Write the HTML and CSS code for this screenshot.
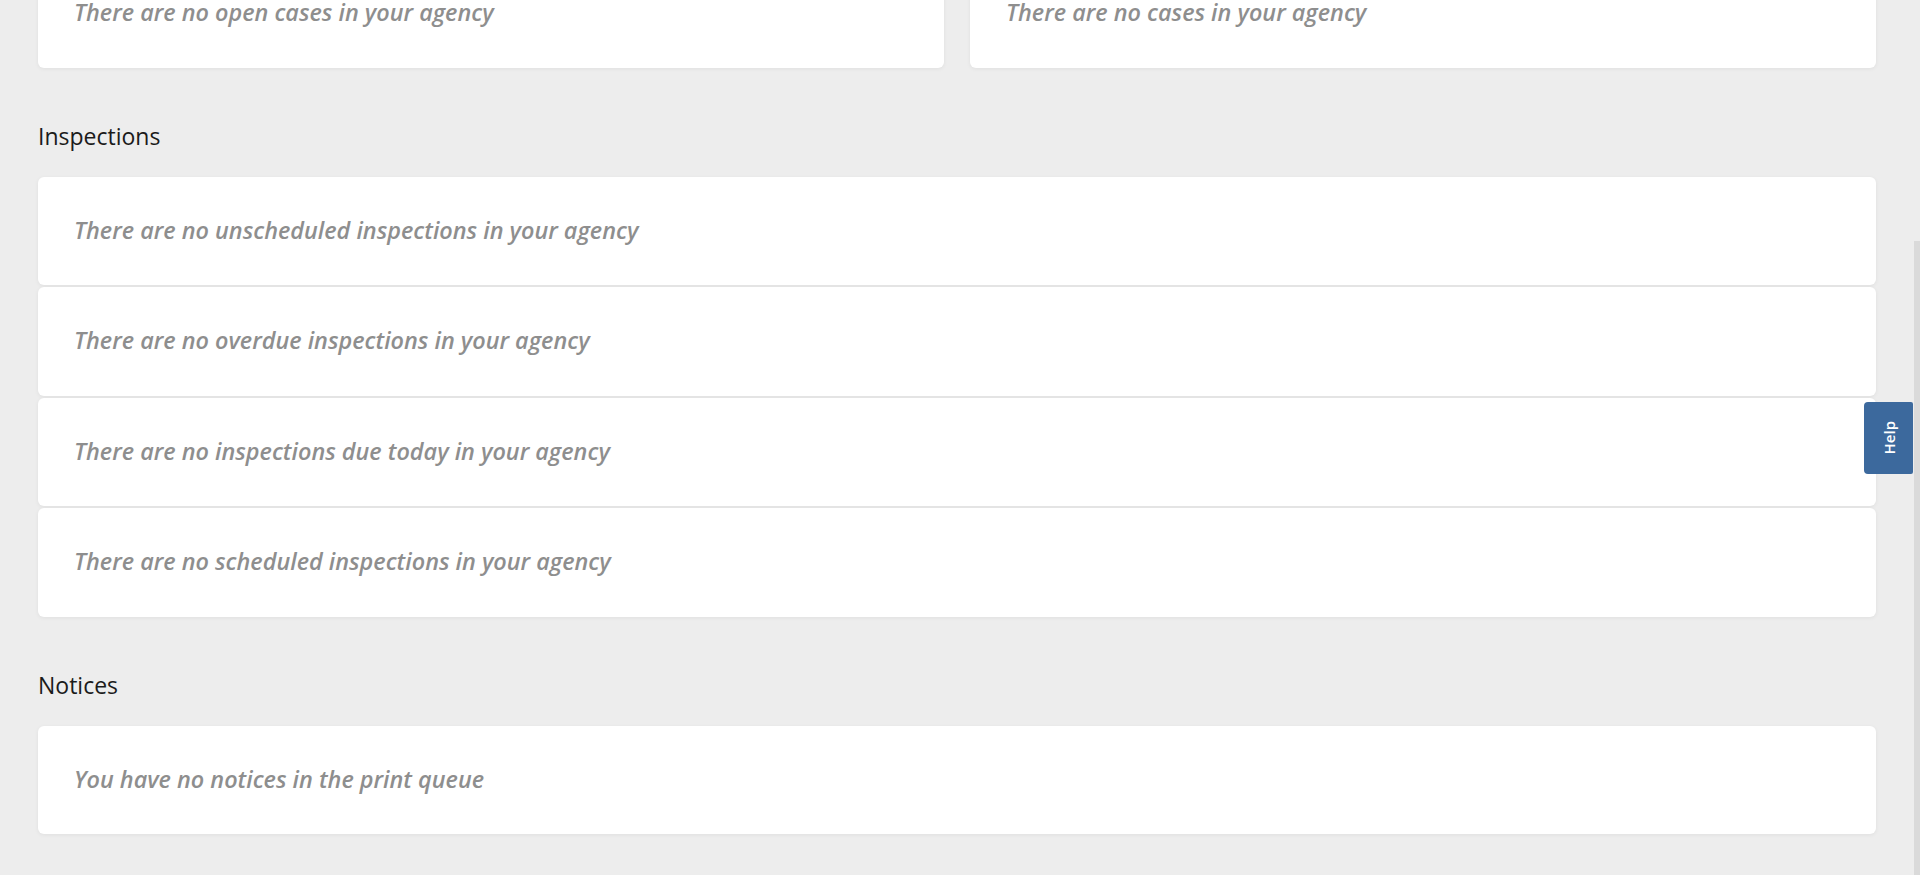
FILE: index.html
```html
<!DOCTYPE html>
<html lang="en">
<head>
<meta charset="utf-8">
<title>Dashboard</title>
<link rel="stylesheet" href="styles.css">
</head>
<body>
<main class="page" id="page">
  <div class="content">
    <header class="dash-header">
      <h1 class="dash-title">Dashboard</h1>
    </header>

    <section class="section">
      <h2 class="section-title">Cases</h2>
      <div class="card-row">
        <div class="card"><p class="empty">There are no open cases in your agency</p></div>
        <div class="card"><p class="empty">There are no cases in your agency</p></div>
      </div>
    </section>

    <section class="section">
      <h2 class="section-title">Inspections</h2>
      <div class="card-list">
        <div class="card"><p class="empty">There are no unscheduled inspections in your agency</p></div>
        <div class="card"><p class="empty">There are no overdue inspections in your agency</p></div>
        <div class="card"><p class="empty">There are no inspections due today in your agency</p></div>
        <div class="card"><p class="empty">There are no scheduled inspections in your agency</p></div>
      </div>
    </section>

    <section class="section">
      <h2 class="section-title">Notices</h2>
      <div class="card-list">
        <div class="card"><p class="empty">You have no notices in the print queue</p></div>
      </div>
    </section>
  </div>
</main>
<div class="scroll-thumb" aria-hidden="true"></div>
<button class="help-tab" type="button"><span class="help-label">Help</span></button>
<script src="script.js"></script>
</body>
</html>
```

FILE: styles.css
```css
html, body {
  margin: 0;
  padding: 0;
  height: 100%;
}

body {
  background: #ededed;
  font-family: "Open Sans", Lato, "Liberation Sans", sans-serif;
  color: #1b1b1b;
  overflow: hidden;
}

.page {
  height: 100vh;
  overflow-y: auto;
  background: #ededed;
}

.content {
  padding: 0 44px 41px 38px;
}

.dash-header {
  padding: 96px 0 41px;
}

.dash-title {
  margin: 0;
  font-size: 30px;
  line-height: 44px;
  font-weight: 600;
}

.section-title {
  margin: 53px 0 26px;
  font-size: 23px;
  line-height: 30px;
  font-weight: 500;
  color: #1b1b1b;
}

.section:first-of-type .section-title {
  margin-top: 0;
}

.card-row {
  display: grid;
  grid-template-columns: 1fr 1fr;
  gap: 26px;
}

.card-list {
  display: flex;
  flex-direction: column;
  gap: 2px;
}

.card {
  background: #ffffff;
  border-radius: 6px;
  box-shadow: 0 1px 4px rgba(0, 0, 0, 0.06);
  height: 108.5px;
  box-sizing: border-box;
  padding: 0 36px 2px;
  display: flex;
  align-items: center;
}

.empty {
  margin: 0;
  font-size: 23.4px;
  line-height: 30px;
  font-style: italic;
  font-weight: 600;
  color: #8e8e8e;
  letter-spacing: 0;
}

.scroll-thumb {
  position: fixed;
  right: 0;
  top: 241px;
  bottom: 0;
  width: 6px;
  background: #dadada;
}

.help-tab {
  position: fixed;
  right: 7px;
  top: 402px;
  width: 49px;
  height: 72px;
  border: 0;
  padding: 0;
  margin: 0;
  background: #3c699d;
  border-radius: 4px 2px 2px 4px;
  display: flex;
  align-items: center;
  justify-content: center;
  cursor: pointer;
}

.help-label {
  writing-mode: vertical-rl;
  transform: rotate(180deg);
  color: #ffffff;
  font-family: "Open Sans", Lato, "Liberation Sans", sans-serif;
  font-size: 15px;
  font-weight: 600;
}
```

FILE: script.js
```js
var page = document.getElementById('page');
page.scrollTop = page.scrollHeight;
```
